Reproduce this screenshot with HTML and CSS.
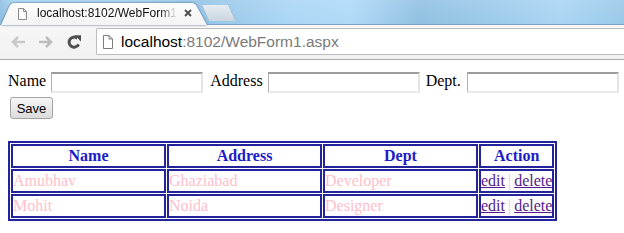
FILE: index.html
```html
<!DOCTYPE html>
<html>
<head>
<meta charset="utf-8">
<title>WebForm1</title>
<link rel="stylesheet" href="styles.css">
</head>
<body>
<div class="chrome">
  <div class="tabbar">
    <div class="tab-wrap">
      <div class="tab">
        <svg class="fav" width="9" height="12" viewBox="0 0 9 12"><path d="M0.5 0.5H5.5L8.5 3.5V11.5H0.5Z" fill="#fff" stroke="#8a8a8a"/><path d="M5.5 0.5V3.5H8.5" fill="none" stroke="#8a8a8a"/></svg>
        <span class="tab-title">localhost:8102/WebForm1</span>
        <svg class="close" width="8" height="8" viewBox="0 0 8 8"><path d="M1 1L7 7M7 1L1 7" stroke="#4a4a4a" stroke-width="1.8"/></svg>
      </div>
    </div>
    <div class="newtab-wrap"><div class="newtab"></div></div>
  </div>
  <div class="toolbar">
    <span class="navbtn">
      <svg width="16" height="14" viewBox="0 0 16 14"><path d="M15 7H3M8 2L3 7L8 12" fill="none" stroke="#c9c9c9" stroke-width="2.6"/></svg>
    </span>
    <span class="navbtn">
      <svg width="16" height="14" viewBox="0 0 16 14"><path d="M1 7H13M8 2L13 7L8 12" fill="none" stroke="#bdbdbd" stroke-width="2.6"/></svg>
    </span>
    <span class="navbtn">
      <svg width="16" height="16" viewBox="0 0 16 16"><path d="M12.6 10.3A5 5 0 1 1 11.2 4.2" fill="none" stroke="#4f4f4f" stroke-width="3"/><path d="M8.6 1.2H15V7.6Z" fill="#4f4f4f"/></svg>
    </span>
    <div class="omnibox">
      <svg class="pageicon" width="10" height="14" viewBox="0 0 10 14"><path d="M0.5 0.5H6L9.5 4V13.5H0.5Z" fill="#fff" stroke="#7d7d7d"/><path d="M6 0.5V4H9.5" fill="none" stroke="#7d7d7d"/></svg>
      <span class="url"><span class="host">localhost</span>:8102/WebForm1.aspx</span>
    </div>
  </div>
</div>
<div class="page">
  <form>
    <div class="fields">
      <span class="lbl">Name</span><input class="txt" type="text">
      <span class="lbl lbl-gap">Address</span><input class="txt" type="text">
      <span class="lbl lbl-gap2">Dept.</span><input class="txt" type="text">
    </div>
    <div class="actions"><input class="btn" type="button" value="Save"></div>
    <table class="grid">
      <tr>
        <th class="c-wide">Name</th>
        <th class="c-wide">Address</th>
        <th class="c-wide">Dept</th>
        <th class="c-act">Action</th>
      </tr>
      <tr>
        <td>Amubhav</td>
        <td>Ghaziabad</td>
        <td>Developer</td>
        <td class="act"><a href="#e1">edit</a> | <a href="#d1">delete</a></td>
      </tr>
      <tr>
        <td>Mohit</td>
        <td>Noida</td>
        <td>Designer</td>
        <td class="act"><a href="#e2">edit</a> | <a href="#d2">delete</a></td>
      </tr>
    </table>
  </form>
</div>
</body>
</html>
```
FILE: styles.css
```css
html, body {
  margin: 0;
  padding: 0;
  background: #fff;
}
body {
  width: 624px;
  overflow: hidden;
}

/* ---------- browser chrome ---------- */
.chrome {
  font-family: "Liberation Sans", Arial, sans-serif;
}
.tabbar {
  height: 25px;
  display: flex;
  align-items: flex-end;
  background:
    linear-gradient(rgba(255,255,255,0.12), rgba(255,255,255,0)),
    linear-gradient(90deg, #8cbde1 0px, #a6d2f1 14px, #a2cfee 120px, #93c3e6 200px, #a9d6f5 290px, #aedaf7 350px, #8fbfe2 420px, #9ccbeb 500px, #a8d5f3 560px, #98c8e9 624px);
  box-shadow: inset 0 -1px 0 #7ea2c2;
}
.tab-wrap {
  margin-left: 1px;
  filter: drop-shadow(0 0 0.8px rgba(50, 85, 125, 0.9));
}
.tab {
  width: 206px;
  height: 22px;
  display: flex;
  align-items: center;
  box-sizing: border-box;
  padding-left: 17px;
  background: linear-gradient(#fdfdfd, #f4f4f4);
  clip-path: polygon(0 100%, 9px 2px, 12px 0, 192px 0, 195px 2px, 206px 100%);
}
.fav {
  display: block;
  flex: none;
  margin-top: -1px;
}
.tab-title {
  margin-left: 10px;
  width: 140px;
  flex: none;
  white-space: nowrap;
  overflow: hidden;
  font-size: 12px;
  color: #111;
  line-height: 14px;
  margin-top: -2px;
  -webkit-mask-image: linear-gradient(90deg, #000 88%, transparent 100%);
  mask-image: linear-gradient(90deg, #000 88%, transparent 100%);
}
.close {
  display: block;
  flex: none;
  margin-left: 7px;
  margin-top: -3px;
}
.newtab-wrap {
  margin-left: -6px;
  margin-bottom: 4px;
  filter: drop-shadow(0 0 0.7px rgba(70, 100, 140, 0.95));
}
.newtab {
  width: 35px;
  height: 16px;
  background: linear-gradient(#e6ecf1, #c9d5df);
  clip-path: polygon(1px 0, 27px 0, 35px 100%, 8px 100%);
}

.toolbar {
  box-sizing: border-box;
  display: flex;
  align-items: flex-start;
  padding: 3px 0 0 4px;
  background: linear-gradient(#f7f7f7, #f1f1f1);
  border-bottom: 1px solid #a9a9a9;
  height: 35px;
}
.navbtn {
  width: 28px;
  height: 27px;
  display: flex;
  align-items: center;
  justify-content: center;
  flex: none;
}
.navbtn svg {
  display: block;
}
.omnibox {
  margin-left: 8px;
  flex: 1;
  height: 27px;
  box-sizing: border-box;
  border: 1px solid #bdbdbd;
  border-right: none;
  border-radius: 2px 0 0 2px;
  background: #fff;
  display: flex;
  align-items: center;
  padding-left: 6px;
  margin-right: -4px;
}
.pageicon {
  display: block;
  flex: none;
}
.url {
  margin-left: 8px;
  font-size: 15.5px;
  color: #7a7a7a;
  white-space: nowrap;
  line-height: 18px;
}
.host {
  color: #000;
}

/* ---------- page ---------- */
.page {
  padding: 8px;
  font-family: "Liberation Serif", "Times New Roman", serif;
  font-size: 16px;
  color: #000;
}
form {
  margin: 0;
}
.fields {
  display: flex;
  align-items: center;
  height: 29px;
}
.lbl {
  line-height: 18px;
  margin-right: 5px;
  margin-bottom: 3px;
  white-space: nowrap;
}
.lbl-gap {
  margin-left: 7px;
}
.lbl-gap2 {
  margin-left: 6px;
  margin-right: 6px;
}
.txt {
  width: 152px;
  height: 21px;
  box-sizing: border-box;
  margin: 0;
  padding: 0 2px;
  border-style: solid;
  border-width: 2px 2px 2px 1px;
  border-color: #9c9c9c #e4e4e4 #ebebeb #b2b2b2;
  background: #fff;
  font: 13px "Liberation Sans", Arial, sans-serif;
  flex: none;
}
.actions {
  display: flex;
  padding-left: 2px;
}
.btn {
  width: 43px;
  height: 22px;
  margin: 0;
  padding: 0;
  box-sizing: border-box;
  border: 1px solid #a3a3a3;
  border-radius: 3px;
  background: linear-gradient(#f7f7f7, #e9e9e9 50%, #dcdcdc);
  font: 13px "Liberation Sans", Arial, sans-serif;
  color: #000;
}

.grid {
  margin-top: 22px;
  border: 2px solid #23239c;
  border-collapse: separate;
  border-spacing: 1px;
  font-family: "Liberation Serif", "Times New Roman", serif;
  font-size: 16px;
}
.grid th,
.grid td {
  border: 2px solid #23239c;
  padding: 1px 0;
  line-height: 18px;
  box-sizing: border-box;
  white-space: nowrap;
}
.grid th {
  color: #1c1cc8;
  font-weight: bold;
  text-align: center;
}
.grid td {
  color: #ffc0cb;
  text-align: left;
}
.c-wide {
  width: 155px;
}
.c-act {
  width: 74px;
}
.grid td.act {
  word-spacing: -1px;
}
.grid a {
  color: #551a8b;
  text-decoration: underline;
}
```
